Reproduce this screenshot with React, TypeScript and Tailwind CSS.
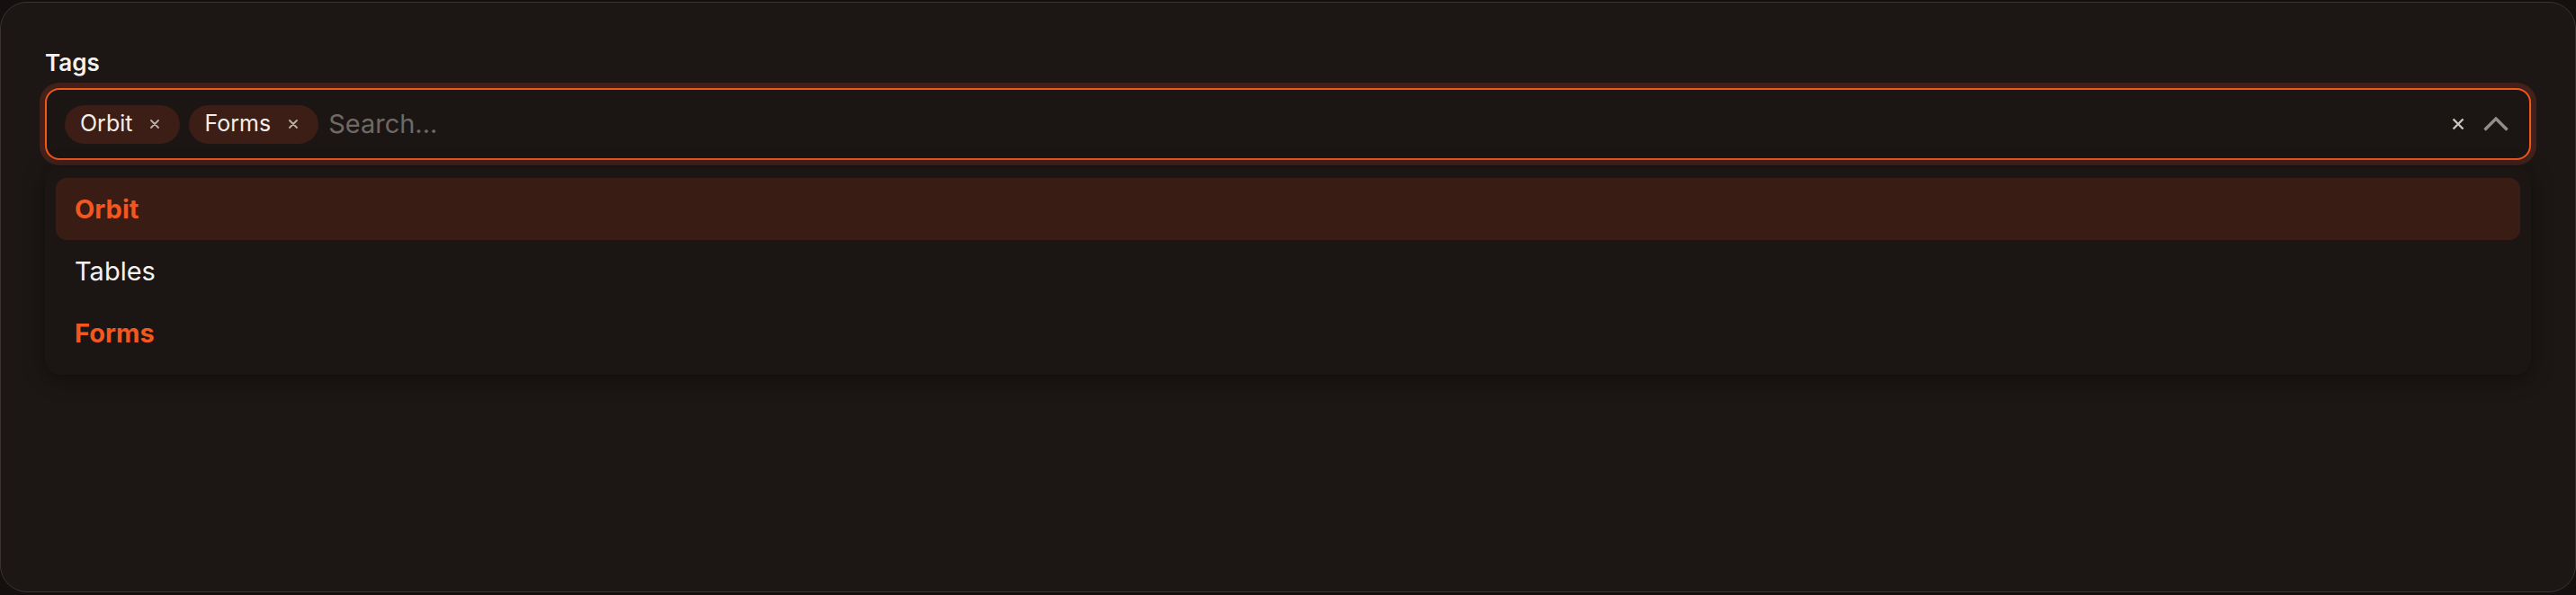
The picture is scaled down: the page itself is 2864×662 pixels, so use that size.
import React from "react";

interface Option {
  label: string;
  selected: boolean;
  active: boolean;
}

const options: Option[] = [
  { label: "Orbit", selected: true, active: true },
  { label: "Tables", selected: false, active: false },
  { label: "Forms", selected: true, active: false },
];

const Chip: React.FC<{ label: string }> = ({ label }) => (
  <span className="flex h-[43px] items-center gap-[20px] rounded-full bg-[#3c1e16] pl-[17px] pr-[23px] text-[25px] text-[#f3eeea]">
    {label}
    <svg width="10" height="10" viewBox="0 0 10 10" className="text-[#b9b0aa]">
      <path d="M1 1L9 9M9 1L1 9" stroke="currentColor" strokeWidth="1.8" strokeLinecap="round" />
    </svg>
  </span>
);

export default function App() {
  return (
    <div
      className="h-[662px] w-full bg-[#141010] pt-[2px]"
      style={{ fontFamily: "Inter, 'Noto Sans', sans-serif" }}
    >
      <div className="h-[657px] rounded-[30px] border border-[#3b332f] bg-[#1c1714] px-[49px] pt-[51px]">
        <label className="block text-[26px] leading-[32px] font-semibold text-[#f6f1ed]">Tags</label>

        {/* Input */}
        <div className="mt-[12px] flex h-[80px] items-center rounded-[16px] border-2 border-[#f2561d] bg-[#1b1613] pl-[20px] pr-[23px] shadow-[0_0_0_6px_#43211a]">
          <div className="flex items-center gap-[10px]">
            <Chip label="Orbit" />
            <Chip label="Forms" />
          </div>
          <span className="ml-[11px] flex-1 text-[29px] text-[#6f6965]">Search...</span>
          <svg width="14" height="14" viewBox="0 0 14 14" className="text-[#cbc5c1]">
            <path d="M1.5 1.5L12.5 12.5M12.5 1.5L1.5 12.5" stroke="currentColor" strokeWidth="2.4" />
          </svg>
          <svg width="28" height="16" viewBox="0 0 28 16" className="ml-[21px] text-[#928d8a]">
            <path d="M1.5 14.5L14 2L26.5 14.5" fill="none" stroke="currentColor" strokeWidth="3.4" />
          </svg>
        </div>

        {/* Dropdown */}
        <div className="mt-[8px] rounded-[17px] bg-[#1b1613] p-3 shadow-[0_4px_24px_rgba(0,0,0,0.45)]">
          {options.map((o) => (
            <div
              key={o.label}
              className={`flex h-[69px] items-center rounded-[12px] pl-[21px] text-[29px] ${
                o.active ? "bg-[#391d15]" : ""
              } ${o.selected ? "font-bold text-[#f4561f]" : "text-[#f6f1ed]"}`}
            >
              {o.label}
            </div>
          ))}
        </div>
      </div>
    </div>
  );
}
